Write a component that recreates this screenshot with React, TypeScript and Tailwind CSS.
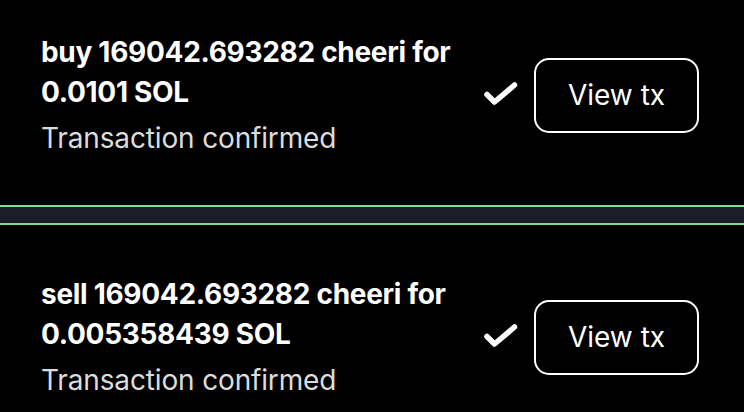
const txs = [
  { title: 'buy 169042.693282 cheeri for 0.0101 SOL', pad: 'pt-[32px] pb-[47px]' },
  { title: 'sell 169042.693282 cheeri for 0.005358439 SOL', pad: 'pt-[49px] pb-[40px]' },
]

const CheckMark = () => (
  <svg width="36" height="28" viewBox="0 0 36 28" fill="none" className="shrink-0">
    <path d="M4 13.5 L11.5 21 L31.5 4" stroke="white" strokeWidth="5.5" strokeLinecap="round" strokeLinejoin="round" />
  </svg>
)

const TxRow = ({ title, pad }: { title: string; pad: string }) => (
  <div className={`flex items-center pl-[41px] pr-[45px] ${pad}`}>
    <div className="flex-1 min-w-0 pr-4">
      <p className="text-[28px] leading-[40px] font-bold text-white tracking-[-0.3px]">{title}</p>
      <p className="mt-[6px] text-[28px] leading-[40px] text-[#dcdcdc] tracking-[-0.15px]">Transaction confirmed</p>
    </div>
    <div className="flex items-center gap-[15px]">
      <CheckMark />
      <button type="button" className="w-[165px] h-[75px] rounded-[15px] border-2 border-white text-white text-[28px] leading-[40px]">
        View tx
      </button>
    </div>
  </div>
)

const App = () => (
  <div className="w-[744px] h-[412px] overflow-hidden bg-black" style={{ fontFamily: 'Inter, "Noto Sans", sans-serif' }}>
    <TxRow {...txs[0]} />
    <div className="h-[20px] bg-[#1c1d28] border-y-2 border-[#7fdc8c]"></div>
    <TxRow {...txs[1]} />
  </div>
)

export default App
